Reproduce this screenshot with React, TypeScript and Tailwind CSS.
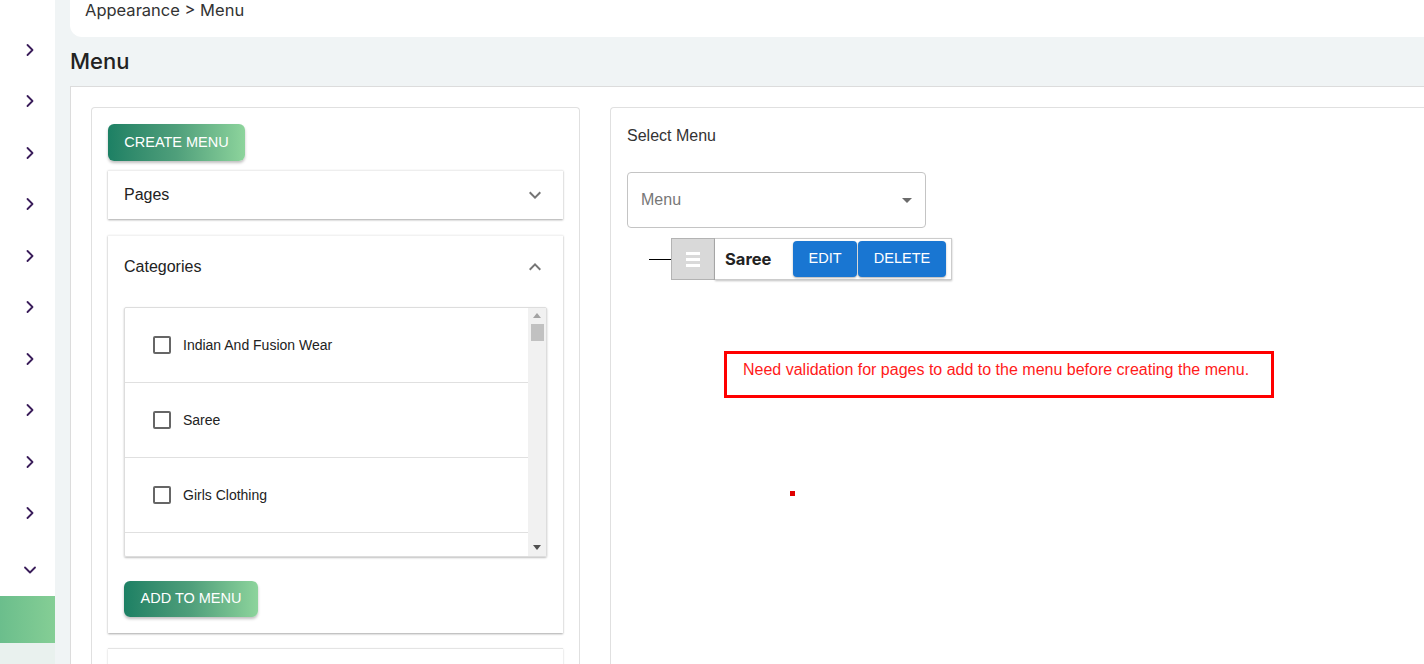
import { ChevronDown, ChevronRight } from "lucide-react";

const sans = { fontFamily: '"Liberation Sans", Arial, sans-serif' };
const geo = { fontFamily: 'Inter, "Open Sans", sans-serif' };

const categories = ["Indian And Fusion Wear", "Saree", "Girls Clothing"];

function GreenButton({ label, className = "" }: { label: string; className?: string }) {
    return (
        <button
            className={`rounded-[6px] bg-linear-to-r from-[#1c8064] via-[#4f9f7b] to-[#8dd49c] text-[14.5px] uppercase text-white shadow-[0_2px_3px_rgba(0,0,0,0.25)] ${className}`}
            style={sans}
        >
            {label}
        </button>
    );
}

function MuiExpand({ up = false }: { up?: boolean }) {
    return (
        <svg width="24" height="24" viewBox="0 0 24 24" className="text-[#757575]">
            <path
                fill="currentColor"
                d={up ? "M12 8l-6 6 1.41 1.41L12 10.83l4.59 4.58L18 14z" : "M16.59 8.59L12 13.17 7.41 8.59 6 10l6 6 6-6z"}
            />
        </svg>
    );
}

export default function App() {
    return (
        <div className="flex min-h-[664px] w-[1424px] overflow-hidden bg-[#f0f4f5]" style={sans}>
            {/* sidebar */}
            <aside className="flex w-[55px] shrink-0 flex-col bg-white">
                <div className="flex flex-col pt-[24px]">
                    {Array.from({ length: 10 }).map((_, i) => (
                        <div key={i} className="flex h-[51.5px] items-center justify-center pl-[4px]">
                            <ChevronRight size={20} strokeWidth={2.2} className="text-[#3a1d5a]" />
                        </div>
                    ))}
                </div>
                <div className="flex h-[55px] items-center justify-center pl-[4px] pt-[6px]">
                    <ChevronDown size={20} strokeWidth={2.2} className="text-[#3a1d5a]" />
                </div>
                <div className="mt-[2px] h-[47px] bg-linear-to-r from-[#6bbe8c] to-[#85ce95]" />
                <div className="flex-1 bg-[#e9f1ee]" />
            </aside>

            {/* main */}
            <main className="flex flex-1 flex-col pl-[15px]">
                <div className="h-[37px] rounded-bl-[12px] bg-white pl-[15px]">
                    <p className="text-[16.5px] leading-[20px] text-[#333]" style={geo}>
                        Appearance &gt; Menu
                    </p>
                </div>
                <div className="flex h-[49px] items-center">
                    <h1 className="text-[22px] font-medium text-[#222]" style={geo}>
                        Menu
                    </h1>
                </div>

                <section className="flex flex-1 gap-[30px] border-l border-t border-[#dcdcdc] bg-white pl-[20px] pt-[20px]">
                    {/* left panel */}
                    <div className="w-[489px] shrink-0 rounded-t-[4px] border border-b-0 border-[#e0e0e0] p-[16px] pb-0">
                        <GreenButton label="Create Menu" className="h-[37px] w-[137px]" />

                        <div className="mt-[9px] flex h-[49px] items-center justify-between border-t border-[#eee] pl-[16px] pr-[16px] shadow-[0_1px_2px_rgba(0,0,0,0.35)]">
                            <span className="text-[16px] text-[#222]">Pages</span>
                            <MuiExpand />
                        </div>

                        <div className="mt-[16px] border-t border-[#f2f2f2] shadow-[0_1px_2px_rgba(0,0,0,0.35)]">
                            <div className="flex h-[63px] items-center justify-between pb-[2px] pl-[16px] pr-[16px]">
                                <span className="text-[16px] text-[#222]">Categories</span>
                                <MuiExpand up />
                            </div>
                            <div className="px-[16px] pb-[16px] pt-[8px]">
                                <div className="flex h-[250px] overflow-hidden rounded-[2px] border border-[#ddd] shadow-[0_1px_2px_rgba(0,0,0,0.25)]">
                                    <ul className="flex-1">
                                        {categories.map((c) => (
                                            <li key={c} className="flex h-[75px] items-center gap-[12px] border-b border-[#e0e0e0] pl-[28px]">
                                                <span className="h-[18px] w-[18px] rounded-[2px] border-2 border-[#666]" />
                                                <span className="text-[14px] text-[#222]">{c}</span>
                                            </li>
                                        ))}
                                        <li className="h-[75px]" />
                                    </ul>
                                    <div className="flex w-[18px] flex-col items-center bg-[#f1f1f1]">
                                        <svg width="8" height="5" viewBox="0 0 8 5" className="mt-[5px]">
                                            <path d="M4 0L8 5H0z" fill="#a3a3a3" />
                                        </svg>
                                        <div className="mt-[6px] h-[17px] w-[13px] bg-[#c1c1c1]" />
                                        <div className="flex-1" />
                                        <svg width="8" height="5" viewBox="0 0 8 5" className="mb-[6px]">
                                            <path d="M0 0H8L4 5z" fill="#505050" />
                                        </svg>
                                    </div>
                                </div>
                                <GreenButton label="Add to Menu" className="mt-[24px] h-[36px] w-[134px]" />
                            </div>
                        </div>

                        <div className="mt-[15px] h-[40px] border-t border-[#e4e4e4] shadow-[0_1px_2px_rgba(0,0,0,0.2)]" />
                    </div>

                    {/* right panel */}
                    <div className="flex-1 rounded-tl-[4px] border-l border-t border-[#e0e0e0] pl-[16px] pt-[16px]">
                        <p className="text-[16px] leading-[24px] text-[#333]">Select Menu</p>

                        <div className="mt-[24px] flex h-[56px] w-[299px] items-center justify-between rounded-[4px] border border-[#c4c4c4] pl-[13px] pr-[13px]">
                            <span className="text-[16px] text-[#777]">Menu</span>
                            <svg width="10" height="5" viewBox="0 0 10 5">
                                <path d="M0 0h10L5 5z" fill="#6b6b6b" />
                            </svg>
                        </div>

                        <div className="ml-[22px] mt-[10px] flex items-center">
                            <div className="h-px w-[22px] bg-black" />
                            <div className="flex h-[42px] w-[44px] flex-col items-center justify-center gap-[3px] border border-[#b3b3b3] bg-[#d9d9d9]">
                                <span className="h-[3px] w-[14px] bg-white" />
                                <span className="h-[3px] w-[14px] bg-white" />
                                <span className="h-[3px] w-[14px] bg-white" />
                            </div>
                            <div className="flex h-[42px] items-center border border-l-0 border-[#ccc] pl-[10px] pr-[5px] shadow-[0_1px_2px_rgba(0,0,0,0.25)]">
                                <span className="mr-[21px] w-[47px] text-[16.5px] font-bold text-[#222]" style={geo}>
                                    Saree
                                </span>
                                <button className="h-[36px] w-[64px] rounded-[4px] bg-[#1976d2] text-[14.5px] text-white shadow-[0_1px_2px_rgba(0,0,0,0.3)]">
                                    EDIT
                                </button>
                                <button className="ml-px h-[36px] w-[88px] rounded-[4px] bg-[#1976d2] text-[14.5px] text-white shadow-[0_1px_2px_rgba(0,0,0,0.3)]">
                                    DELETE
                                </button>
                            </div>
                        </div>

                        <div className="ml-[97px] mt-[71px] flex h-[47px] w-[550px] items-start border-[3px] border-[#ff0000] pl-[16px] pt-[5px]">
                            <span className="text-[16px] leading-[22px] text-[#ff1a1a]">
                                Need validation for pages to add to the menu before creating the menu.
                            </span>
                        </div>

                        <div className="ml-[163px] mt-[93px] h-[5px] w-[5px] bg-[#e00000]" />
                    </div>
                </section>
            </main>
        </div>
    );
}
